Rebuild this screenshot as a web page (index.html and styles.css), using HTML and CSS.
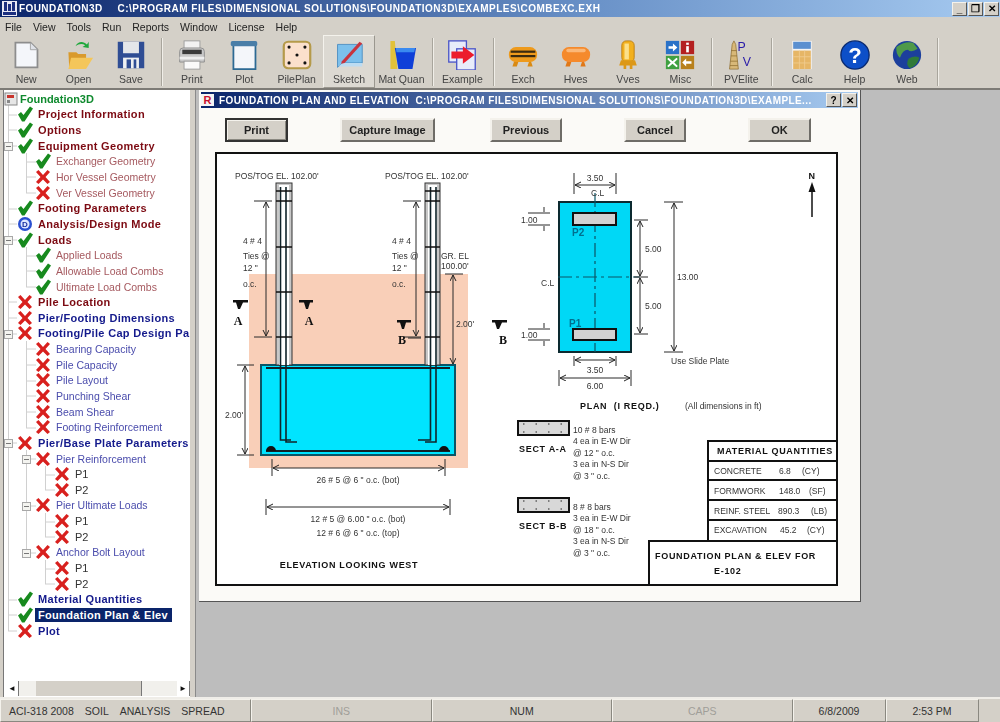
FILE: index.html
```html
<!DOCTYPE html>
<html>
<head>
    <meta charset="UTF-8">
    <title>Foundation3D</title>
    <link rel="stylesheet" href="styles.css">
</head>
<body>
<svg class="defs" width="0" height="0">
    <symbol id="ok" viewBox="0 0 16 16"><path d="M1 8.500 L4 6 L6.500 9 L13 0.500 L16 2.500 L7.500 15.500 L5 15.500 Z" fill="#178a1e"/></symbol>
    <symbol id="no" viewBox="0 0 16 16"><path d="M1 3 L3.500 1 L8 6 L12.500 1 L15 3 L10.500 8 L15 13 L12.500 15 L8 10.500 L3.500 15 L1 13 L5.500 8 Z" fill="#d8201e"/></symbol>
    <marker id="tip" markerWidth="7" markerHeight="7" refX="6" refY="3" orient="auto-start-reverse" markerUnits="userSpaceOnUse">
        <path d="M0 0 L6 3 L0 6" fill="none" stroke="#222" stroke-width="1"/>
    </marker>
</svg>

<div class="app">
    <div class="titlebar">
        <svg class="app-icon" width="15" height="15" viewBox="0 0 15 15"><rect width="15" height="15" fill="#e8e8f4"/><path d="M2 1h3v9H2zM6 3h3v7H6zM10 1h3v9h-3z" fill="#1c2f80"/><rect x="1" y="11" width="13" height="3" fill="#1c2f80"/></svg>
        <span class="title-text">FOUNDATION3D</span>
        <span class="title-path">C:\PROGRAM FILES\DIMENSIONAL SOLUTIONS\FOUNDATION3D\EXAMPLES\COMBEXC.EXH</span>
        <div class="caption-btns">
            <span class="cap-btn">_</span><span class="cap-btn">&#10064;</span><span class="cap-btn">&#10005;</span>
        </div>
    </div>

    <div class="menubar">
        <span>File</span><span>View</span><span>Tools</span><span>Run</span><span>Reports</span><span>Window</span><span>License</span><span>Help</span>
    </div>

    <div class="toolbar">
        <div class="tool">
            <svg viewBox="0 0 34 34"><path d="M5 3h17l8 8v20H5z" fill="#f4f6fa" stroke="#8d8d8d" stroke-width="2"/><path d="M22 3v8h8" fill="#dfe2e8" stroke="#a0a0a0"/></svg>
            New
        </div>
        <div class="tool">
            <svg viewBox="0 0 34 34"><path d="M13 7 C16 1 22 1 26 5 L28 2 L28 9 L21 8 L24 6 C21 4 17 4 13 7Z" fill="#1fa83c"/><path d="M5 14h9l2 2h9v6l-3 11H6z" fill="#d99a2c"/><path d="M8 20h25l-8 13H5z" fill="#f4c65a"/></svg>
            Open
        </div>
        <div class="tool">
            <svg viewBox="0 0 34 34"><rect x="2" y="2" width="30" height="30" fill="#2f4d94"/><rect x="8" y="2" width="18" height="13" fill="#e4e6ea"/><rect x="8" y="20" width="18" height="12" fill="#eef0f2"/><rect x="12" y="22" width="5" height="10" fill="#2f4d94"/><rect x="20" y="22" width="3" height="10" fill="#2f4d94"/></svg>
            Save
        </div>
        <i class="tool-sep"></i>
        <div class="tool">
            <svg viewBox="0 0 34 34"><rect x="8" y="1" width="18" height="10" fill="#f2f2f2" stroke="#9a9a9a"/><path d="M3 13 Q3 9 7 9h20q4 0 4 4v12H3z" fill="#c9c9c9" stroke="#8a8a8a"/><rect x="6" y="11" width="22" height="5" fill="#3a3a3a"/><rect x="3" y="19" width="28" height="3" fill="#eeeeee"/><rect x="8" y="24" width="18" height="9" fill="#fafafa" stroke="#9a9a9a"/></svg>
            Print
        </div>
        <div class="tool">
            <svg viewBox="0 0 34 34"><rect x="5" y="5" width="25" height="28" fill="#f4f6fa" stroke="#2d6a94" stroke-width="2"/><rect x="2" y="1" width="30" height="6" rx="2" fill="#4a7ea8"/></svg>
            Plot
        </div>
        <div class="tool">
            <svg viewBox="0 0 34 34"><rect x="2" y="2" width="30" height="30" rx="5" fill="#fbe0cc" stroke="#b59a4a" stroke-width="2.500"/><g fill="#111"><circle cx="8" cy="8" r="1.800"/><circle cx="26" cy="8" r="1.800"/><circle cx="17" cy="17" r="1.800"/><circle cx="8" cy="26" r="1.800"/><circle cx="26" cy="26" r="1.800"/></g></svg>
            PilePlan
        </div>
        <div class="tool tool-hot">
            <svg viewBox="0 0 34 34"><path d="M4 5h28v21H10L4 31z" fill="#7cc0ec" stroke="#4a8cc0"/><path d="M10 26h22v4H5z" fill="#bcdcf2"/><path d="M9 24 L29 2 L32 4 L12 26 L8 27Z" fill="#c8343e"/></svg>
            Sketch
        </div>
        <div class="tool">
            <svg viewBox="0 0 34 34"><path d="M5 1h5l3 32H5z" fill="#e2c23a"/><path d="M10 9h24l-4 24H14z" fill="#0f3fd8"/><path d="M11 9h22l-1 5H12z" fill="#3a8af0"/></svg>
            Mat Quan
        </div>
        <i class="tool-sep"></i>
        <div class="tool">
            <svg viewBox="0 0 34 34"><rect x="2" y="1" width="20" height="24" fill="#e8ecfa" stroke="#4a55c8" stroke-width="1.500"/><rect x="11" y="10" width="21" height="24" fill="#e8ecfa" stroke="#4a55c8" stroke-width="1.500"/><path d="M5 13h13V7l13 10-13 10v-6H5z" fill="#ec1c2c"/></svg>
            Example
        </div>
        <i class="tool-sep"></i>
        <div class="tool">
            <svg viewBox="0 0 34 34"><path d="M7 24l-2 6h5l2-6M24 24l-2 6h6l-2-6" fill="#d98a14"/><rect x="1" y="8" width="32" height="17" rx="8" fill="#ee9a1c"/><rect x="3" y="12" width="28" height="2.500" fill="#3a2a10"/><rect x="3" y="17" width="28" height="2.500" fill="#3a2a10"/></svg>
            Exch
        </div>
        <div class="tool">
            <svg viewBox="0 0 34 34"><path d="M7 24l-2 6h5l2-6M24 24l-2 6h6l-2-6" fill="#e07818"/><rect x="1" y="8" width="32" height="17" rx="8" fill="#f58a2c"/><rect x="6" y="10" width="22" height="4" rx="2" fill="#fbb878"/></svg>
            Hves
        </div>
        <div class="tool">
            <svg viewBox="0 0 34 34"><rect x="10" y="1" width="14" height="24" rx="5" fill="#f2b01e" stroke="#b87c10"/><rect x="13" y="4" width="5" height="18" fill="#fbe08a"/><path d="M9 23h16l2 6h-5v4h-3v-4h-4v4h-3v-4H7z" fill="#dc9818"/></svg>
            Vves
        </div>
        <div class="tool">
            <svg viewBox="0 0 34 34"><rect x="1" y="1" width="15" height="15" fill="#2a72c8"/><path d="M4 7h5V4l5 4.500-5 4.500v-3H4z" fill="#fff"/><rect x="18" y="1" width="15" height="15" fill="#b42020"/><rect x="24" y="3" width="3" height="2.500" fill="#fff"/><rect x="24" y="7" width="3" height="7" fill="#fff"/><rect x="1" y="18" width="15" height="15" fill="#3fa040"/><path d="M4 20l4.500 4 4.500-4 1.500 1.500-4 4 4 4-1.500 1.500-4.500-4-4.500 4-1.500-1.500 4-4-4-4z" fill="#fff"/><rect x="18" y="18" width="15" height="15" fill="#b8801c"/><path d="M30 24h-6v-3l-4.500 4.500 4.500 4.500v-3h6z" fill="#fff"/></svg>
            Misc
        </div>
        <i class="tool-sep"></i>
        <div class="tool">
            <svg viewBox="0 0 34 34"><path d="M4 33 L7 5 L9 1 L11 5 L14 33z" fill="#d8b878" stroke="#8a6a2c" stroke-width=".8"/><path d="M6 12h6M5.500 18h7M5 24h8M4.500 29h9" stroke="#8a6a2c" stroke-width=".8"/><text x="13" y="13" class="pv-letter">P</text><text x="19" y="29.500" class="pv-letter">V</text></svg>
            PVElite
        </div>
        <i class="tool-sep"></i>
        <div class="tool">
            <svg viewBox="0 0 34 34"><rect x="6" y="1" width="22" height="32" fill="#f4f4f4"/><rect x="7" y="2" width="20" height="8" fill="#5a8fd0"/><rect x="7" y="12" width="20" height="21" fill="#e6b666"/><path d="M7 19h20M7 26h20M14 12v21M20 12v21" stroke="#f0cc90"/></svg>
            Calc
        </div>
        <div class="tool">
            <svg viewBox="0 0 34 34"><circle cx="17" cy="17" r="16" fill="#0d4fc8" stroke="#0a2a70" stroke-width="1.500"/><text x="17" y="26" class="help-mark">?</text></svg>
            Help
        </div>
        <div class="tool">
            <svg viewBox="0 0 34 34"><circle cx="17" cy="17" r="16" fill="#1c3f9c"/><path d="M5 8 Q14 1 24 3 L29 10 Q22 15 18 11 Q12 11 9 20 Q4 16 5 8Z" fill="#4f9a4a"/><path d="M19 21 Q26 17 31 20 Q28 30 20 32 Q15 27 19 21Z" fill="#2f7a3a"/></svg>
            Web
        </div>
        <i class="tool-sep"></i>
    </div>

    <div class="workspace">
        <div class="tree-pane">
            <div class="tree-list">
                <svg class="tree-lines" width="187" height="590" viewBox="3 90 187 590">
                    <path d="M8.500 105V631M26.500 153V193M26.500 247V287M26.500 341V428M26.500 450V553M45.500 466V490M45.500 513V537M45.500 560V584
                             M8 115H17M8 130H17M8 146H17M8 209H17M8 224H17M8 240H17M8 302H17M8 318H17M8 334H17M8 443H17M8 600H17M8 615H17M8 631H17
                             M26 162H36M26 177H36M26 193H36M26 256H36M26 271H36M26 287H36M26 349H36M26 365H36M26 381H36M26 396H36M26 412H36M26 428H36M26 459H36M26 506H36M26 553H36
                             M45 475H55M45 490H55M45 522H55M45 537H55M45 569H55M45 584H55" fill="none" stroke="#d0d0d0"/>
                    <g fill="#f4f4f0" stroke="#a8a8a8">
                        <rect x="4.500" y="142.500" width="8" height="8"/><rect x="4.500" y="236.500" width="8" height="8"/><rect x="4.500" y="330.500" width="8" height="8"/><rect x="4.500" y="439.500" width="8" height="8"/>
                        <rect x="22.500" y="455.500" width="8" height="8"/><rect x="22.500" y="502.500" width="8" height="8"/><rect x="22.500" y="549.500" width="8" height="8"/>
                    </g>
                    <path d="M6 146.500H11M6 240.500H11M6 334.500H11M6 443.500H11M24 459.500H29M24 506.500H29M24 553.500H29" stroke="#777"/>
                </svg>
                <div class="row root">
                    <svg class="root-icon" width="14" height="14" viewBox="0 0 14 14"><rect x="1" y="1" width="12" height="12" fill="#e6e6e6" stroke="#888"/><path d="M3 3h7v3H3z" fill="#c8342c"/><path d="M3 8h3v3H3z" fill="#888"/></svg>
                    <span class="root-label">Foundation3D</span>
                </div>
                <div class="row l1 red"><svg class="ico"><use href="#ok"/></svg><span>Project Information</span></div>
                <div class="row l1 red"><svg class="ico"><use href="#ok"/></svg><span>Options</span></div>
                <div class="row l1 red"><svg class="ico"><use href="#ok"/></svg><span>Equipment Geometry</span></div>
                <div class="row l2 red"><svg class="ico"><use href="#ok"/></svg><span>Exchanger Geometry</span></div>
                <div class="row l2 red"><svg class="ico"><use href="#no"/></svg><span>Hor Vessel Geometry</span></div>
                <div class="row l2 red"><svg class="ico"><use href="#no"/></svg><span>Ver Vessel Geometry</span></div>
                <div class="row l1 red"><svg class="ico"><use href="#ok"/></svg><span>Footing Parameters</span></div>
                <div class="row l1 red">
                    <svg class="ico" viewBox="0 0 16 16"><circle cx="8" cy="8" r="7" fill="#2a4fd0"/><circle cx="8" cy="8" r="4.500" fill="#dfe6ff"/><text x="8" y="11" class="mode-mark">D</text></svg>
                    <span>Analysis/Design Mode</span>
                </div>
                <div class="row l1 red"><svg class="ico"><use href="#ok"/></svg><span>Loads</span></div>
                <div class="row l2 red"><svg class="ico"><use href="#ok"/></svg><span>Applied Loads</span></div>
                <div class="row l2 red"><svg class="ico"><use href="#ok"/></svg><span>Allowable Load Combs</span></div>
                <div class="row l2 red"><svg class="ico"><use href="#ok"/></svg><span>Ultimate Load Combs</span></div>
                <div class="row l1 red"><svg class="ico"><use href="#no"/></svg><span>Pile Location</span></div>
                <div class="row l1 blue"><svg class="ico"><use href="#no"/></svg><span>Pier/Footing Dimensions</span></div>
                <div class="row l1 blue"><svg class="ico"><use href="#no"/></svg><span>Footing/Pile Cap Design Pa</span></div>
                <div class="row l2 blue"><svg class="ico"><use href="#no"/></svg><span>Bearing Capacity</span></div>
                <div class="row l2 blue"><svg class="ico"><use href="#no"/></svg><span>Pile Capacity</span></div>
                <div class="row l2 blue"><svg class="ico"><use href="#no"/></svg><span>Pile Layout</span></div>
                <div class="row l2 blue"><svg class="ico"><use href="#no"/></svg><span>Punching Shear</span></div>
                <div class="row l2 blue"><svg class="ico"><use href="#no"/></svg><span>Beam Shear</span></div>
                <div class="row l2 blue"><svg class="ico"><use href="#no"/></svg><span>Footing Reinforcement</span></div>
                <div class="row l1 blue"><svg class="ico"><use href="#no"/></svg><span>Pier/Base Plate Parameters</span></div>
                <div class="row l2 blue"><svg class="ico"><use href="#no"/></svg><span>Pier Reinforcement</span></div>
                <div class="row l3"><svg class="ico"><use href="#no"/></svg><span>P1</span></div>
                <div class="row l3"><svg class="ico"><use href="#no"/></svg><span>P2</span></div>
                <div class="row l2 blue"><svg class="ico"><use href="#no"/></svg><span>Pier Ultimate Loads</span></div>
                <div class="row l3"><svg class="ico"><use href="#no"/></svg><span>P1</span></div>
                <div class="row l3"><svg class="ico"><use href="#no"/></svg><span>P2</span></div>
                <div class="row l2 blue"><svg class="ico"><use href="#no"/></svg><span>Anchor Bolt Layout</span></div>
                <div class="row l3"><svg class="ico"><use href="#no"/></svg><span>P1</span></div>
                <div class="row l3"><svg class="ico"><use href="#no"/></svg><span>P2</span></div>
                <div class="row l1 blue"><svg class="ico"><use href="#ok"/></svg><span>Material Quantities</span></div>
                <div class="row l1 blue"><svg class="ico"><use href="#ok"/></svg><span class="selected">Foundation Plan &amp; Elev</span></div>
                <div class="row l1 blue"><svg class="ico"><use href="#no"/></svg><span>Plot</span></div>
            </div>
            <div class="hscroll">
                <span class="scroll-btn">&#9668;</span>
                <span class="scroll-thumb"></span>
                <span class="scroll-track"></span>
                <span class="scroll-btn">&#9658;</span>
            </div>
        </div>

        <div class="mdi">
            <div class="dialog">
                <div class="dlg-title">
                    <span class="dlg-icon">R</span>
                    <span class="dlg-text">FOUNDATION PLAN AND ELEVATION&nbsp; C:\PROGRAM FILES\DIMENSIONAL SOLUTIONS\FOUNDATION3D\EXAMPLE...</span>
                    <span class="cap-btn small">?</span><span class="cap-btn small">&#10005;</span>
                </div>
                <div class="dlg-buttons">
                    <button class="btn btn-print">Print</button>
                    <button class="btn btn-capture">Capture Image</button>
                    <button class="btn btn-previous">Previous</button>
                    <button class="btn btn-cancel">Cancel</button>
                    <button class="btn btn-ok">OK</button>
                </div>

                <svg class="drawing" width="623" height="434" viewBox="215 153 623 434">
                    <!-- elevation -->
                    <rect x="249" y="275" width="219" height="194" fill="#f9cfb8"/>
                    <rect x="261" y="366" width="194" height="90" fill="#00e4ff" stroke="#0b5566" stroke-width="2"/>

                    <g fill="#c8c8c8" stroke="#333" stroke-width="1">
                        <rect x="276" y="184" width="16" height="182"/>
                        <rect x="425" y="184" width="15" height="182"/>
                    </g>
                    <g fill="#fff">
                        <rect x="279" y="186" width="10" height="180"/>
                        <rect x="428" y="186" width="9" height="180"/>
                    </g>
                    <path d="M280.500 188V441H291M286 188V443H297M436 188V443H425M430.500 188V441H418" fill="none" stroke="#10232a" stroke-width="1.600"/>
                    <path d="M276 192H292M276 202H292M276 248H292M276 293H292M276 338H292M425 192H440M425 202H440M425 248H440M425 293H440M425 338H440" stroke="#111" stroke-width="1.300"/>
                    <path d="M266 369H450M266 452H450" stroke="#10232a" stroke-width="2"/>
                    <path d="M266 452a5 5 0 0 1 10 0zM439 452a5 5 0 0 1 10 0z" fill="#111"/>

                    <g class="dim-lines">
                        <path d="M254 202H272M254 338H272M403 202H421M403 338H421M445 275H463M237 366H254M237 456H254"/>
                        <path d="M272 460V477M445 460V477M266 500V516M450 500V516"/>
                        <path d="M266 203V337" marker-start="url(#tip)" marker-end="url(#tip)"/>
                        <path d="M416 203V337" marker-start="url(#tip)" marker-end="url(#tip)"/>
                        <path d="M453 276V365" marker-start="url(#tip)" marker-end="url(#tip)"/>
                        <path d="M245 367V455" marker-start="url(#tip)" marker-end="url(#tip)"/>
                        <path d="M273 469H444" marker-start="url(#tip)" marker-end="url(#tip)"/>
                        <path d="M267 508H449" marker-start="url(#tip)" marker-end="url(#tip)"/>
                    </g>

                    <g class="note">
                        <text x="235" y="180">POS/TOG EL. 102.00'</text>
                        <text x="385" y="180">POS/TOG EL. 102.00'</text>
                        <text x="243" y="245">4 # 4</text>
                        <text x="243" y="260">Ties @</text>
                        <text x="243" y="272">12 "</text>
                        <text x="243" y="288">o.c.</text>
                        <text x="392" y="245">4 # 4</text>
                        <text x="392" y="260">Ties @</text>
                        <text x="392" y="272">12 "</text>
                        <text x="392" y="288">o.c.</text>
                        <text x="441" y="260">GR. EL</text>
                        <text x="441" y="270">100.00'</text>
                        <text x="456" y="328">2.00'</text>
                        <text x="225" y="419">2.00'</text>
                        <text x="358" y="484" text-anchor="middle">26 # 5 @ 6 " o.c. (bot)</text>
                        <text x="358" y="523" text-anchor="middle">12 # 5 @ 6.00 " o.c. (bot)</text>
                        <text x="358" y="537" text-anchor="middle">12 # 6 @ 6 " o.c. (top)</text>
                    </g>
                    <text x="349" y="569" class="head" text-anchor="middle">ELEVATION LOOKING WEST</text>

                    <g fill="#111">
                        <path d="M233 301H248V303.500H243L240 310H238L236 303.500H233Z"/>
                        <path d="M299 301H313V303.500H310L308 310H306L304 303.500H299Z"/>
                        <path d="M397 321H411V323.500H406L404 330H402L400 323.500H397Z"/>
                        <path d="M492 321H507V323.500H502L499 330H497L495 323.500H492Z"/>
                    </g>
                    <g class="mark">
                        <text x="238" y="326" text-anchor="middle">A</text>
                        <text x="309" y="326" text-anchor="middle">A</text>
                        <text x="402" y="345" text-anchor="middle">B</text>
                        <text x="503" y="345" text-anchor="middle">B</text>
                    </g>
                    <path d="M408 339H421" stroke="#222"/>

                    <!-- plan -->
                    <rect x="559" y="203" width="72" height="150" fill="#00d8f6" stroke="#0c2a30" stroke-width="2"/>
                    <path d="M595 194V353M558 278H640" stroke="#0b5566" stroke-width="1.200" stroke-dasharray="14 4 3 4" fill="none"/>
                    <rect x="573" y="214" width="43" height="12" fill="#d2d2d2" stroke="#111" stroke-width="2"/>
                    <rect x="573" y="330" width="43" height="11" fill="#d2d2d2" stroke="#111" stroke-width="2"/>
                    <text x="572" y="237" class="pile-label">P2</text>
                    <text x="569" y="328" class="pile-label">P1</text>

                    <g class="dim-lines">
                        <path d="M574 174V195M616 174V195M574 357V367M616 357V367M559 371V387M631 371V387"/>
                        <path d="M528 214H550M528 226H550M528 330H550M528 341H550M634 221H648M634 278H648M634 335H648M664 203H683M664 353H683"/>
                        <path d="M575 186H615" marker-start="url(#tip)" marker-end="url(#tip)"/>
                        <path d="M575 361H615" marker-start="url(#tip)" marker-end="url(#tip)"/>
                        <path d="M560 379H630" marker-start="url(#tip)" marker-end="url(#tip)"/>
                        <path d="M640 222V277" marker-start="url(#tip)" marker-end="url(#tip)"/>
                        <path d="M640 279V334" marker-start="url(#tip)" marker-end="url(#tip)"/>
                        <path d="M674 204V352" marker-start="url(#tip)" marker-end="url(#tip)"/>
                        <path d="M544 208V213M544 227V232M544 324V329M544 342V347"/>
                    </g>

                    <g class="note">
                        <text x="595" y="182" text-anchor="middle">3.50</text>
                        <text x="591" y="197">C.L</text>
                        <text x="541" y="287">C.L</text>
                        <text x="521" y="224">1.00</text>
                        <text x="521" y="339">1.00</text>
                        <text x="645" y="253">5.00</text>
                        <text x="645" y="310">5.00</text>
                        <text x="677" y="281">13.00</text>
                        <text x="671" y="365">Use Slide Plate</text>
                        <text x="595" y="374" text-anchor="middle">3.50</text>
                        <text x="595" y="390" text-anchor="middle">6.00</text>
                        <text x="685" y="410">(All dimensions in ft)</text>
                    </g>
                    <text x="580" y="410" class="head">PLAN&#160; (I REQD.)</text>
                    <text x="812" y="180" class="head" text-anchor="middle">N</text>
                    <path d="M812 218V190" stroke="#111" stroke-width="1.500"/>
                    <path d="M812 183L815.500 193H808.500Z" fill="#111"/>

                    <!-- sections -->
                    <rect x="518" y="422" width="51" height="14" fill="#d8d8d8" stroke="#111" stroke-width="2"/>
                    <rect x="518" y="499" width="51" height="14" fill="#d8d8d8" stroke="#111" stroke-width="2"/>
                    <path d="M523 425H565M523 433H565M523 502H565M523 510H565" stroke="#222" stroke-dasharray="1.500 11"/>
                    <text x="519" y="453" class="head">SECT A-A</text>
                    <text x="519" y="530" class="head">SECT B-B</text>
                    <g class="note">
                        <text x="573" y="434">10 # 8 bars</text>
                        <text x="573" y="445">4 ea in E-W Dir</text>
                        <text x="573" y="457">@ 12 " o.c.</text>
                        <text x="573" y="468">3 ea in N-S Dir</text>
                        <text x="573" y="480">@ 3 " o.c.</text>
                        <text x="573" y="511">8 # 8 bars</text>
                        <text x="573" y="522">3 ea in E-W Dir</text>
                        <text x="573" y="534">@ 18 " o.c.</text>
                        <text x="573" y="545">3 ea in N-S Dir</text>
                        <text x="573" y="557">@ 3 " o.c.</text>
                    </g>

                    <!-- material table -->
                    <path d="M837 442H708V542M708 462H837M708 481H837M708 501H837M708 521H837M649 586V542H837" fill="none" stroke="#111" stroke-width="2"/>
                    <text x="717" y="455" class="head">MATERIAL QUANTITIES</text>
                    <g class="note table-text">
                        <text x="714" y="475">CONCRETE</text><text x="779" y="475">6.8</text><text x="802" y="475">(CY)</text>
                        <text x="714" y="495">FORMWORK</text><text x="779" y="495">148.0</text><text x="809" y="495">(SF)</text>
                        <text x="714" y="515">REINF. STEEL</text><text x="778" y="515">890.3</text><text x="811" y="515">(LB)</text>
                        <text x="714" y="534">EXCAVATION</text><text x="780" y="534">45.2</text><text x="807" y="534">(CY)</text>
                    </g>
                    <text x="655" y="560" class="head">FOUNDATION PLAN &amp; ELEV FOR</text>
                    <text x="714" y="575" class="head">E-102</text>

                    <rect x="216" y="154" width="621" height="432" fill="none" stroke="#111" stroke-width="2"/>
                </svg>
            </div>
        </div>
    </div>

    <div class="statusbar">
        <div class="panel panel-main"><span>ACI-318 2008</span><span>SOIL</span><span>ANALYSIS</span><span>SPREAD</span></div>
        <div class="panel panel-key dim">INS</div>
        <div class="panel panel-key">NUM</div>
        <div class="panel panel-key dim">CAPS</div>
        <div class="panel panel-date">6/8/2009</div>
        <div class="panel panel-time">2:53 PM</div>
    </div>
</div>
</body>
</html>
```

FILE: styles.css
```css
/* Foundation3D main window */
html, body {
    margin: 0;
    padding: 0;
}

body {
    width: 1000px;
    height: 722px;
    overflow: hidden;
    background-color: #d4d0c8;
    font-family: "Liberation Sans", Arial, sans-serif;
}

.defs {
    position: absolute;
}

.app {
    display: flex;
    flex-direction: column;
    height: 722px;
    filter: blur(0.45px);
}

/* title bar */
.titlebar {
    display: flex;
    align-items: center;
    height: 17px;
    flex: none;
    padding-left: 2px;
    color: white;
    font-size: 10px;
    font-weight: bold;
    background: linear-gradient(to right, #0a246a, #6b93c9 60%, #a6caf0);
}

.app-icon {
    margin-right: 2px;
}

.title-text {
    margin-right: 15px;
    letter-spacing: 0.4px;
}

.title-path {
    letter-spacing: 0.5px;
}

.caption-btns {
    display: flex;
    gap: 1px;
    margin-left: auto;
    margin-right: 1px;
}

.cap-btn {
    display: inline-flex;
    align-items: center;
    justify-content: center;
    width: 15px;
    height: 14px;
    color: black;
    font-size: 10px;
    font-weight: bold;
    background-color: #d4d0c8;
    border: 1px solid;
    border-color: #f4f2ec #555 #555 #f4f2ec;
    box-sizing: border-box;
}

/* menu and toolbar */
.menubar {
    display: flex;
    gap: 11px;
    align-items: center;
    height: 18px;
    flex: none;
    padding: 1px 0 0 5px;
    box-sizing: border-box;
    font-size: 10.5px;
    color: #222;
}

.toolbar {
    display: flex;
    height: 53px;
    flex: none;
    font-size: 10.5px;
    color: #444;
}

.tool {
    display: flex;
    flex-direction: column;
    align-items: center;
    width: 52.4px;
    padding-top: 5px;
    box-sizing: border-box;
    gap: 3px;
    white-space: nowrap;
}

.tool svg {
    width: 30px;
    height: 30px;
    flex: none;
}

.tool-hot {
    background-color: #dcd9d2;
    border: 1px solid;
    border-color: #f4f2ec #9a978f #9a978f #f4f2ec;
    padding-top: 4px;
}

.tool-sep {
    width: 1px;
    margin: 3px 2.5px 2px 4px;
    background-color: #a8a59c;
    border-right: 1px solid #f0eee8;
}

.pv-letter {
    font-family: "Liberation Sans", sans-serif;
    font-size: 14px;
    fill: #2a1ca8;
}

.help-mark {
    font-family: "Liberation Sans", sans-serif;
    font-size: 25px;
    font-weight: bold;
    fill: white;
    text-anchor: middle;
}

.mode-mark {
    font-family: "Liberation Sans", sans-serif;
    font-size: 8px;
    font-weight: bold;
    fill: #1a2fa0;
    text-anchor: middle;
}

/* tree */
.workspace {
    display: flex;
    flex: 1;
    min-height: 0;
    border-top: 2px solid #7d7b76;
}

.tree-pane {
    display: flex;
    flex-direction: column;
    width: 187px;
    margin-left: 3px;
    margin-right: 5px;
    flex: none;
    background-color: white;
    border-left: 1px solid #777;
    box-sizing: border-box;
}

.tree-list {
    position: relative;
    flex: 1;
    min-height: 0;
    overflow: hidden;
    padding-top: 1px;
}

.tree-lines {
    position: absolute;
    left: -1px;
    top: 0;
}

.row {
    position: relative;
    display: flex;
    align-items: center;
    height: 15.65px;
    white-space: nowrap;
    font-size: 11px;
}

.root-icon {
    margin-right: 2px;
}

.root-label {
    color: #0f8a2e;
    font-weight: bold;
}

.ico {
    width: 16px;
    height: 16px;
    flex: none;
    margin-right: 5px;
}

.l1 {
    padding-left: 13px;
    font-weight: bold;
    letter-spacing: 0.32px;
}

.l2 {
    padding-left: 31px;
    font-size: 10.5px;
}

.l3 {
    padding-left: 50px;
    color: #333;
}

.l1.red {
    color: #7c0a12;
}

.l2.red {
    color: #a65a60;
}

.l1.blue {
    color: #141a8c;
}

.l2.blue {
    color: #4a4cac;
}

.selected {
    margin-left: -3px;
    padding: 1px 4px 1px 3px;
    color: white;
    background-color: #0a246a;
}

.hscroll {
    display: flex;
    align-items: stretch;
    height: 15px;
    flex: none;
    margin-left: 2px;
    margin-bottom: 1px;
    background-color: #f1f0ec;
}

.scroll-btn {
    display: flex;
    align-items: center;
    justify-content: center;
    width: 12px;
    font-size: 8px;
    color: #111;
    background-color: white;
    border-right: 1px solid #777;
}

.scroll-thumb {
    width: 105px;
    margin-left: 17px;
    background-color: #d4d0c8;
    border-right: 1px solid #777;
}

.scroll-track {
    flex: 1;
}

/* dialog */
.mdi {
    flex: 1;
    min-width: 0;
    background-color: #bdbdbd;
    border-left: 1px solid #8a8a8a;
    padding-left: 3px;
}

.dialog {
    width: 662px;
    height: 512px;
    padding: 2px;
    background-color: #fbfaf7;
    border-right: 1px solid #555;
    border-bottom: 1px solid #555;
    box-sizing: border-box;
}

.dlg-title {
    display: flex;
    align-items: center;
    height: 16px;
    color: white;
    font-size: 10px;
    font-weight: bold;
    background: linear-gradient(to right, #0a246a, #a6caf0);
    gap: 1px;
    padding-right: 1px;
}

.dlg-icon {
    width: 13px;
    margin-right: 4px;
    text-align: center;
    color: #c8102e;
    font-size: 11px;
    background-color: #f4f4f4;
}

.dlg-text {
    flex: 1;
    overflow: hidden;
    white-space: nowrap;
    letter-spacing: 0.4px;
}

.cap-btn.small {
    width: 15px;
}

.dlg-buttons {
    display: flex;
    align-items: center;
    height: 24px;
    padding: 10px 0 0 24px;
}

.btn {
    height: 24px;
    padding: 0;
    font-family: "Liberation Sans", sans-serif;
    font-size: 11px;
    font-weight: bold;
    color: #222;
    background-color: #d4d0c8;
    border: 2px solid;
    border-color: #f4f2ec #6e6c67 #6e6c67 #f4f2ec;
}

.btn-print {
    width: 63px;
    border: 2px solid #333;
    box-shadow: inset 1px 1px 0 #f4f2ec, inset -1px -1px 0 #8a8880;
}

.btn-capture {
    width: 95px;
    margin-left: 52px;
}

.btn-previous {
    width: 72px;
    margin-left: 55px;
}

.btn-cancel {
    width: 62px;
    margin-left: 62px;
}

.btn-ok {
    width: 63px;
    margin-left: 62px;
}

.drawing {
    display: block;
    margin: 10px 0 0 14px;
    background-color: white;
}

.dim-lines path {
    fill: none;
    stroke: #2a2a2a;
    stroke-width: 1;
}

.note text {
    font-family: "Liberation Sans", sans-serif;
    font-size: 8.5px;
    fill: #333;
}

.head {
    font-family: "Liberation Sans", sans-serif;
    font-size: 9px;
    font-weight: bold;
    fill: #111;
    letter-spacing: 0.7px;
}

.mark text {
    font-family: "Liberation Serif", serif;
    font-size: 12px;
    font-weight: bold;
    fill: #111;
}

.pile-label {
    font-family: "Liberation Sans", sans-serif;
    font-size: 10px;
    font-weight: bold;
    fill: #00708f;
}

/* status bar */
.statusbar {
    display: flex;
    height: 25px;
    flex: none;
    font-size: 10.5px;
    color: #333;
    border-top: 2px solid #efede8;
    box-sizing: border-box;
}

.panel {
    display: flex;
    align-items: center;
    justify-content: center;
    box-sizing: border-box;
    background-color: #d4d0c8;
    border: 1px solid;
    border-color: #f4f2ec #8a8880 #8a8880 #f4f2ec;
}

.panel-main {
    width: 251px;
    gap: 11px;
    justify-content: flex-start;
    padding-left: 8px;
}

.panel-key {
    width: 180.5px;
}

.panel-date {
    width: 93px;
}

.panel-time {
    width: 93px;
}

.dim {
    color: #a09e98;
}
```
